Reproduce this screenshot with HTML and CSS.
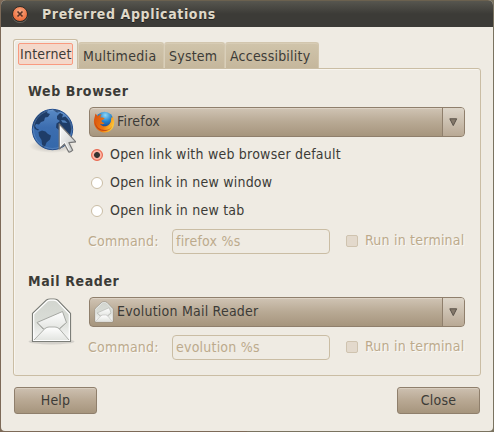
FILE: index.html
```html
<!DOCTYPE html>
<html lang="en">
<head>
<meta charset="utf-8">
<title>Preferred Applications</title>
<link rel="stylesheet" href="styles.css">
</head>
<body>
<div class="window">
  <header class="titlebar">
    <span class="close-dot"><svg width="8" height="8" viewBox="0 0 8 8"><path d="M1.5 1.5l5 5M6.5 1.5l-5 5" stroke="#593325" stroke-width="1.7"/></svg></span>
    <h1>Preferred Applications</h1>
  </header>
  <main>
    <nav class="tabs">
      <div class="tab active"><span>Internet</span></div>
      <div class="tab multimedia"><span>Multimedia</span></div>
      <div class="tab system"><span>System</span></div>
      <div class="tab accessibility"><span>Accessibility</span></div>
    </nav>
    <div class="panel">
      <section class="browser">
        <h2>Web Browser</h2>
        <div class="body">
          <svg class="icon" width="48" height="52" viewBox="0 0 48 52">
            <defs>
              <linearGradient id="sea" x1="0" y1="0" x2="0" y2="1"><stop offset="0" stop-color="#5a8bc6"/><stop offset=".45" stop-color="#3c6daf"/><stop offset="1" stop-color="#3468aa"/></linearGradient>
              <radialGradient id="shade"><stop offset="0" stop-color="#777" stop-opacity=".5"/><stop offset="1" stop-color="#777" stop-opacity="0"/></radialGradient>
              <linearGradient id="cur" x1="0" y1="0" x2="1" y2="1"><stop offset="0" stop-color="#fff"/><stop offset="1" stop-color="#c2c4c2"/></linearGradient>
              <clipPath id="disc"><circle cx="24.500" cy="23.500" r="20"/></clipPath>
            </defs>
            <ellipse cx="24" cy="40" rx="23" ry="7" fill="url(#shade)"/>
            <circle cx="24.500" cy="23.500" r="20.200" fill="url(#sea)" stroke="#27508e"/>
            <g fill="#1f3d68" clip-path="url(#disc)">
              <path d="M5 18l3-7 6-5 6-1.500-1 2.500 3 1-2 3-3 .5-1 3.500-3 1-2 2.500-3-.5-1 2 1.500 2.500 2.500 1-1 1-3-1.500-2.500-4z"/>
              <path d="M10.500 26l3.500-1.500 3.500 1 2.500 2.500 3 1.500-1 4-3.500 3-1.500 4-2.500 1-1-7.500-2.500-4z"/>
              <path d="M25 4l5-.5 3 2-4 1zM29 10l3-3 3 1.500-1 3 3.500-1 5 5 1.500 7-2 7-3.500-1-2-4.500-5 .5-3.500-3 .5-4 3.500-2.500-3-2z"/>
              <path d="M33 14l4 .5 2.500 2.500-5-.5z" fill="#5181bb"/>
            </g>
            <circle cx="24.500" cy="23.500" r="19" fill="none" stroke="#7ea5d4" stroke-opacity=".4"/>
            <path d="M31.200 18v25l5.300-5 4.200 8q2 .5 4-1.800l-3.800-7.500 7-.8z" fill="url(#cur)" stroke="#777" stroke-width="1.200" stroke-linejoin="round"/>
            <path d="M32.500 21v19l4.300-4 4.300 8" fill="none" stroke="#fff" stroke-opacity=".8"/>
          </svg>
          <div class="fields">
            <div class="combo">
              <div class="value">
                <svg width="22" height="22" viewBox="0 0 22 22">
                  <defs>
                    <radialGradient id="blue" cx=".55" cy=".2" r=".8"><stop offset="0" stop-color="#8ed8f6"/><stop offset=".45" stop-color="#2482cc"/><stop offset="1" stop-color="#182d75"/></radialGradient>
                    <linearGradient id="fox" x1="0" y1=".3" x2="1" y2=".7"><stop offset="0" stop-color="#d95512"/><stop offset=".55" stop-color="#ee7810"/><stop offset="1" stop-color="#ffd33d"/></linearGradient>
                  </defs>
                  <circle cx="11.500" cy="9.500" r="8.800" fill="url(#blue)"/>
                  <path d="M2.500 2.500L1.200 8C-.5 15 5 21.500 11.500 21.500 18 21.500 22 16 21 9.500L19.800 5l-.9 2.500-1.300-2.800c1.500 5-.2 9.500-4.600 10.500-2.600.6-5-.5-6-2.400 2 .8 3.500.2 4.700-.9-2.500-.2-3.500-1.200-3-2.700l3-1.400C11 6.300 9 6.500 7.200 6.200L8.500 3C6.500 3.500 5.500 4.500 4.800 5.300z" fill="url(#fox)"/>
                  <path d="M2 11c0 5 4 9 9 9 4 0 7-2 8-5-2 3-4 4-7 4-5 0-9-3-10-8z" fill="#a82510" opacity=".6"/>
                </svg>
                <span>Firefox</span>
              </div>
              <div class="arrow"><svg width="9" height="9" viewBox="0 0 9 9"><path d="M.8.8h6.900L4.250 7.600z" fill="#85796b" stroke="#5a5249"/></svg></div>
            </div>
            <ul class="radios">
              <li><i class="radio on"></i><span>Open link with web browser default</span></li>
              <li><i class="radio"></i><span>Open link in new window</span></li>
              <li><i class="radio"></i><span>Open link in new tab</span></li>
            </ul>
            <div class="command"><label>Command:</label><div class="entry"><span>firefox %s</span></div><i class="check"></i><span class="run">Run in terminal</span></div>
          </div>
        </div>
      </section>
      <section class="mail">
        <h2>Mail Reader</h2>
        <div class="body">
          <svg class="icon" width="48" height="52" viewBox="0 0 48 52">
            <defs>
              <linearGradient id="env" x1="0" y1="0" x2="0" y2="1"><stop offset="0" stop-color="#d2d5cf"/><stop offset=".5" stop-color="#d9dcd6"/><stop offset="1" stop-color="#fafafa"/></linearGradient>
              <linearGradient id="flap" x1="0" y1="0" x2="0" y2="1"><stop offset="0" stop-color="#fff"/><stop offset="1" stop-color="#e3e5e1"/></linearGradient>
              <g id="letter">
                <path d="M4.500 45.500V17.500L18.500 4Q20 3 22 3h4q2 0 3.500 1L42.500 17.500v28z" fill="url(#env)" stroke="#7c7e79" stroke-width="1.200" stroke-linejoin="round"/>
                <path d="M5.700 44.300V18L19 5.200q1.500-1 3.500-1h3q2 0 3.500 1L41.300 18v26.300z" fill="none" stroke="#fff" stroke-width="1.200"/>
                <path d="M9 26.500L34.500 15.500 38.500 26.500 31 33H15z" fill="url(#flap)" stroke="#a5a7a2" stroke-width="1"/>
                <path d="M6 44L17 32.500Q19 31 21 31h6q2 0 4 1.500L41 44z" fill="url(#flap)"/>
                <path d="M6 44L17 32.500Q19 31 21 31h6q2 0 4 1.500L41 44M9 26.500l7 6.500M38.500 26.500l-7 6.500" fill="none" stroke="#aeb0ab"/>
              </g>
            </defs>
            <ellipse cx="23.500" cy="45.500" rx="23" ry="3" fill="#777" opacity=".22"/>
            <use href="#letter"/>
          </svg>
          <div class="fields">
            <div class="combo">
              <div class="value">
                <svg width="22" height="22" viewBox="0 1 47 47"><use href="#letter"/></svg>
                <span>Evolution Mail Reader</span>
              </div>
              <div class="arrow"><svg width="9" height="9" viewBox="0 0 9 9"><path d="M.8.8h6.900L4.250 7.600z" fill="#85796b" stroke="#5a5249"/></svg></div>
            </div>
            <div class="command"><label>Command:</label><div class="entry"><span>evolution %s</span></div><i class="check"></i><span class="run">Run in terminal</span></div>
          </div>
        </div>
      </section>
    </div>
    <footer><button>Help</button><button>Close</button></footer>
  </main>
</div>
</body>
</html>
```
FILE: styles.css
```css
* { box-sizing: border-box; }
body {
  margin: 0;
  height: 432px;
  overflow: hidden;
  background: linear-gradient(90deg, #7d6a58 50%, #7a7360 50%);
  font: 14px/18px "DejaVu Sans Condensed", "DejaVu Sans", sans-serif;
  font-stretch: condensed;
  letter-spacing: .22px;
  color: #3c3b37;
}
h1, h2, ul { margin: 0; padding: 0; }
h1, h2 { font-size: 14px; font-weight: bold; letter-spacing: .62px; white-space: nowrap; }
span, label { white-space: nowrap; }
.window {
  width: 492px;
  height: 431px;
  margin-left: 1px;
  overflow: hidden;
  border-radius: 5px 5px 4px 4px;
  background: #efebe3;
}
.titlebar {
  display: flex;
  align-items: center;
  height: 27px;
  padding-left: 11px;
  border-top: 1px solid #6b614f;
  background: linear-gradient(#57564f, #3c3b37 50%);
  color: #dfd8c8;
}
.titlebar h1 { margin-left: 14px; text-shadow: 0 1px #24231f; }
.close-dot {
  display: flex;
  align-items: center;
  justify-content: center;
  width: 16px;
  height: 16px;
  border: 1px solid #302d28;
  border-radius: 50%;
  background: radial-gradient(circle at 50% 35%, #f8ac88, #ef7443 65%, #cb5227);
  box-shadow: 0 1px #68665f;
}
main { padding: 12px 12px 0; }
.tabs { display: flex; align-items: flex-end; height: 29px; }
.tab {
  display: flex;
  align-items: center;
  height: 26px;
  padding: 1px 0 0 4px;
  border: 1px solid #d2c6ae;
  border-left-color: #d9cfba;
  border-bottom: 0;
  border-radius: 3px 3px 0 0;
  background: linear-gradient(#d0c4ab, #c5b79c);
  box-shadow: inset 0 1px #d7ccb5;
}
.tab.active {
  width: 65px;
  height: 30px;
  margin-bottom: -1px;
  padding: 0 4px 1px;
  border-color: #cabda4;
  background: #efebe3;
  box-shadow: inset 1px 1px #f9f7f3;
  z-index: 1;
}
.active span {
  height: 22px;
  width: 55px;
  padding: 1px 0 0 1px;
  border: 1px solid #f99a80;
  border-radius: 2px;
  background: #f4d8ca;
}
.multimedia { width: 86px; letter-spacing: .35px; }
.system { width: 61px; }
.accessibility { width: 94px; }
.panel {
  height: 308px;
  padding: 13px 15px 0 14px;
  border: 1px solid #cabda4;
  border-radius: 0 3px 3px 3px;
  box-shadow: inset 1px 1px #f8f5ef;
}
.browser { height: 190px; }
h2 { height: 19px; }
.body { display: flex; }
.icon { width: 48px; height: 52px; margin: 5px 13px 0 0; }
.fields { width: 376px; padding-top: 6px; }
.combo {
  display: flex;
  height: 30px;
  border: 1px solid #8f7f6c;
  border-radius: 4px;
  background: linear-gradient(#d0c4b4, #b8a994 50%, #a6957d);
  box-shadow: inset 0 1px #ddd2c4;
}
.value { display: flex; align-items: center; flex: 1; padding-left: 3px; gap: 2px; }
.value span, .entry span, .command label { padding-bottom: 2px; }
.arrow {
  display: flex;
  align-items: center;
  justify-content: center;
  width: 22px;
  border-left: 1px solid #8f7f6c;
  border-radius: 0 3px 3px 0;
  background: linear-gradient(#ddd5c9, #b9a995);
}
.radios { list-style: none; padding-top: 3px; }
.radios li { display: flex; align-items: center; height: 28px; padding-left: 2px; gap: 7px; }
.radios span { padding-bottom: 1px; }
.radio {
  width: 12px;
  height: 12px;
  margin-top: 2px;
  border: 1px solid #cabda5;
  border-radius: 50%;
  background: #fff;
}
.radio.on {
  border-color: #e96850;
  background: radial-gradient(circle, #353330 0 2.500px, #f9a594 3.300px, #ffc3b5 4px, #f4715a 5.500px);
}
.command { display: flex; align-items: center; height: 25px; margin-top: 5px; color: #bcaa8c; text-shadow: 1px 1px #fbf9f5; }
.mail .command { margin-top: 8px; }
.command label { width: 84px; margin: 0 0 0 -1px; }
.entry {
  display: flex;
  align-items: center;
  width: 158px;
  height: 25px;
  padding-left: 3px;
  border: 1px solid #cabda4;
  border-radius: 4px;
  text-shadow: none;
}
.check {
  width: 12px;
  height: 12px;
  margin: -1px 0 0 16px;
  border: 1px solid #cfc3af;
  border-radius: 2px;
  background: #e3d9cc;
}
.run { margin: -4px 0 0 7px; }
footer { display: flex; justify-content: space-between; padding: 11px 1px 0; }
button {
  width: 83px;
  height: 27px;
  padding: 0 0 1px;
  border: 1px solid #8f7f6c;
  border-radius: 3px;
  background: linear-gradient(#cdc0b0, #b8a893 50%, #a6957d);
  box-shadow: inset 0 1px #d8cdbe;
  color: #3c3b37;
  font: inherit;
  letter-spacing: inherit;
}
```
